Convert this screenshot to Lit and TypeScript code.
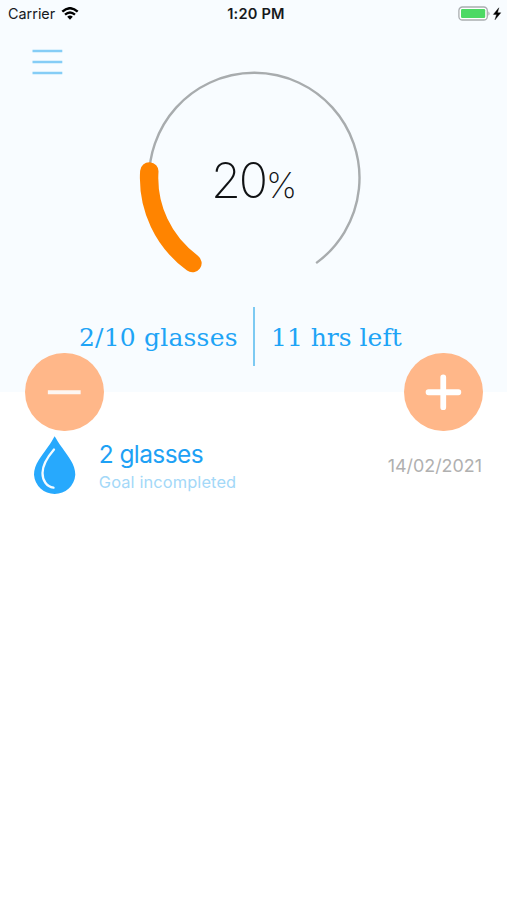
import { LitElement, html, css, svg } from "lit";
import { customElement, property } from "lit/decorators.js";

const polar = (cx: number, cy: number, r: number, deg: number) => {
  const a = (deg * Math.PI) / 180;
  return `${(cx + r * Math.cos(a)).toFixed(2)} ${(cy + r * Math.sin(a)).toFixed(2)}`;
};

const arc = (cx: number, cy: number, r: number, from: number, sweep: number) =>
  `M${polar(cx, cy, r, from)}A${r} ${r} 0 ${sweep > 180 ? 1 : 0} 1 ${polar(cx, cy, r, from + sweep)}`;

@customElement("status-bar")
class StatusBar extends LitElement {
  static styles = css`
    :host {
      display: grid;
      grid-template-columns: 1fr auto 1fr;
      height: 28px;
      align-items: center;
      padding: 0 5px 0 8px;
      box-sizing: border-box;
      font: 400 14.4px/28px Inter, sans-serif;
      color: #16191c;
    }
    .left, .right { display: flex; align-items: center; }
    .left { gap: 6px; }
    .right { justify-content: flex-end; }
    .time { font-weight: 600; font-size: 14.6px; letter-spacing: 0.2px; padding-left: 2px; }
    svg { display: block; }
  `;
  render() {
    return html`
      <div class="left">
        <span>Carrier</span>
        <svg width="18" height="14" viewBox="0 0 18 14">
          <path d="M1.3 4.7Q9-2.3 16.7 4.7" fill="none" stroke="#000" stroke-width="2.4" />
          <path d="M4 7.7Q9 3.3 14 7.7" fill="none" stroke="#000" stroke-width="2.3" />
          <path d="M6.2 9.8Q9 7.3 11.8 9.8L9 12.7Z" fill="#000" />
        </svg>
      </div>
      <span class="time">1:20 PM</span>
      <div class="right">
        <svg width="44" height="16" viewBox="0 0 44 16">
          <rect x="0.9" y="1" width="28.4" height="13" rx="3.6" fill="#fff" stroke="#a9adb0" stroke-width="1.3" />
          <rect x="3" y="3.1" width="24.2" height="8.8" rx="1.2" fill="#4cd964" />
          <path d="M30.4 5.2q2.4 2.3 0 4.6z" fill="#a9adb0" />
          <path d="M40.8 1.8L35.4 8.4H38.6L37 13.8L42.8 6.8H39.5Z" fill="#000" stroke="#000" stroke-width=".4" />
        </svg>
      </div>
    `;
  }
}

@customElement("progress-gauge")
class ProgressGauge extends LitElement {
  @property({ type: Number }) percent = 0;
  static styles = css`
    :host { display: grid; width: 231px; height: 216px; }
    svg, .value { grid-area: 1 / 1; }
    svg { display: block; overflow: visible; }
    .value {
      display: flex;
      align-items: baseline;
      justify-content: center;
      padding-top: 89px;
      font: 200 48.5px/60px Inter, sans-serif;
      color: #101214;
    }
    .number { letter-spacing: -2.2px; }
    .unit { font-size: 35px; width: 32px; }
  `;
  render() {
    const sweep = 288;
    return html`
      <svg width="231" height="216" viewBox="0 0 231 216">
        ${svg`
          <path d=${arc(115.3, 116, 105.2, 126, sweep)} fill="none" stroke="#a8acae" stroke-width="2.4" />
          <path d=${arc(115.3, 116, 105.2, 126, (sweep * this.percent) / 100)} fill="none" stroke="#ff8400" stroke-width="18.4" stroke-linecap="round" />
        `}
      </svg>
      <div class="value"><span class="number">${this.percent}</span><span class="unit">%</span></div>
    `;
  }
}

@customElement("round-button")
class RoundButton extends LitElement {
  @property() kind = "minus";
  static styles = css`
    :host { display: block; width: 78.5px; height: 78.5px; border-radius: 50%; background: #ffb789; }
    svg { display: block; }
  `;
  render() {
    return html`<svg width="78.5" height="78.5" viewBox="0 0 79 79">
      ${this.kind === "plus"
        ? svg`<path d="M24.7 39.5H54.7M39.5 24.5V54.5" stroke="#fff" stroke-width="5.8" stroke-linecap="round" />`
        : svg`<path d="M23 39.5H56" stroke="#fdf7f3" stroke-width="4.2" />`}
    </svg>`;
  }
}

@customElement("history-row")
class HistoryRow extends LitElement {
  @property() amount = "";
  @property() note = "";
  @property() date = "";
  static styles = css`
    :host {
      display: flex;
      align-items: center;
      padding: 0 25px 0 33px;
      font-family: Inter, sans-serif;
    }
    svg { display: block; flex: none; }
    .body { flex: 1; margin-left: 22.8px; }
    .amount { font-size: 24.5px; line-height: 30px; letter-spacing: -0.6px; color: #1ea1f5; }
    .note { font-size: 16.4px; line-height: 22px; margin-top: 2px; letter-spacing: 0.12px; color: #a3d8f8; }
    .date { font-size: 17.9px; line-height: 24px; color: #b0b0b0; }
  `;
  render() {
    return html`
      <svg width="43" height="60" viewBox="0 0 43 60">
        <path d="M21.6 .2C23.5 3 25.5 6.7 29 11.5C35 20 42.3 28.5 42.3 38.7A20.7 20.7 0 0 1 1 38.7C1 28.5 8.5 20 14.5 11.5C18 6.7 20 3 21.6 .2Z" fill="#27a9fd" />
        <path d="M21 13.5C14.5 21 9.5 28.5 9.5 37C9.5 44.5 13.5 50.5 20.5 51.7" fill="none" stroke="#f4fbff" stroke-width="2.3" stroke-linecap="round" />
      </svg>
      <div class="body">
        <div class="amount">${this.amount}</div>
        <div class="note">${this.note}</div>
      </div>
      <div class="date">${this.date}</div>
    `;
  }
}

@customElement("app-root")
class AppRoot extends LitElement {
  static styles = css`
    :host { display: block; min-height: 900px; background: #fff; }
    .panel { height: 392px; background: #f8fcff; display: flex; flex-direction: column; }
    .nav { height: 34px; padding: 20px 0 0 32px; box-sizing: border-box; }
    .nav svg { display: block; overflow: visible; }
    .gauge { margin-left: 139px; }
    .stats {
      display: flex;
      align-items: center;
      height: 59px;
      margin-top: 29.4px;
      padding-left: 79px;
      font: 400 25px/32px "DejaVu Serif", serif;
      color: #1ea4f6;
      white-space: nowrap;
    }
    .stat { padding-top: 2px; }
    .stat.left { width: 174px; letter-spacing: 0.2px; }
    .stat.time { letter-spacing: 0; margin-left: 16px; }
    .divider { width: 2px; height: 59px; background: #7dcaf2; }
    .actions {
      display: flex;
      justify-content: space-between;
      padding: 0 24.5px 0 25.3px;
      margin-top: -39.3px;
      position: relative;
    }
    .list { padding-top: 4.7px; }
  `;
  render() {
    return html`
      <div class="panel">
        <status-bar></status-bar>
        <div class="nav">
          <svg width="31" height="28" viewBox="0 0 31 28">
            <path d="M.5 3H30.3M.5 14H30.3M.5 25H30.3" stroke="#85cdf6" stroke-width="2.4" />
          </svg>
        </div>
        <progress-gauge class="gauge" percent="20"></progress-gauge>
        <div class="stats">
          <span class="stat left">2/10 glasses</span>
          <span class="divider"></span>
          <span class="stat time">11 hrs left</span>
        </div>
      </div>
      <div class="actions">
        <round-button kind="minus"></round-button>
        <round-button kind="plus"></round-button>
      </div>
      <div class="list">
        <history-row amount="2 glasses" note="Goal incompleted" date="14/02/2021"></history-row>
      </div>
    `;
  }
}
